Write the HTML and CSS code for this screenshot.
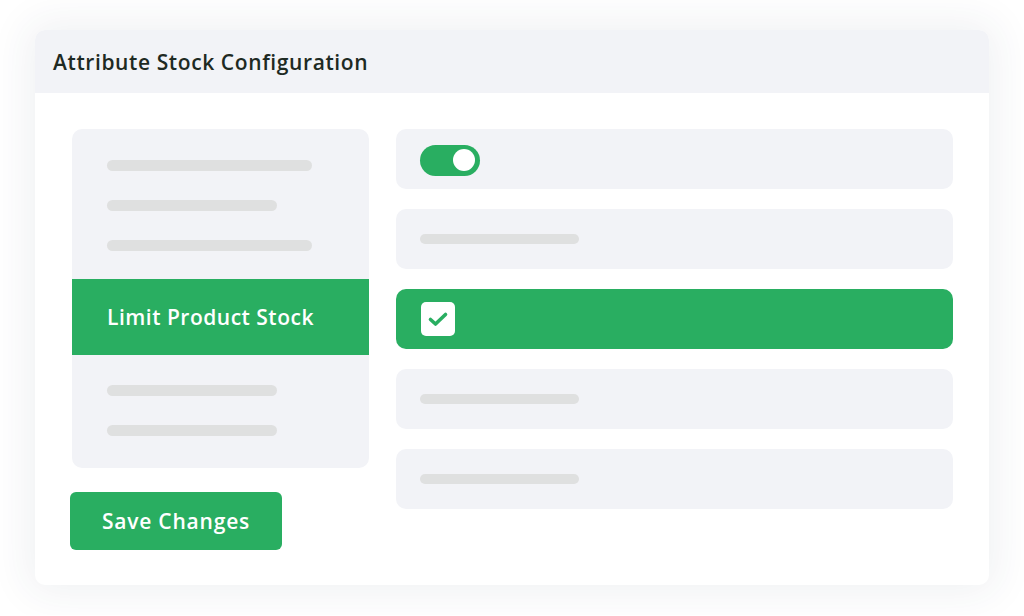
FILE: index.html
```html
<!DOCTYPE html>
<html lang="en">
<head>
  <meta charset="UTF-8">
  <meta name="viewport" content="width=device-width, initial-scale=1.0">
  <title>Attribute Stock Configuration</title>
  <link rel="stylesheet" href="styles.css">
</head>
<body>
  <div class="card">
    <div class="card-header">Attribute Stock Configuration</div>

    <div class="card-body">
      <div class="left-col">
        <div class="side-panel">
          <div class="lines top-lines">
            <span class="line long"></span>
            <span class="line short"></span>
            <span class="line long"></span>
          </div>
          <div class="side-item active">Limit Product Stock</div>
          <div class="lines bottom-lines">
            <span class="line short"></span>
            <span class="line short"></span>
          </div>
        </div>
        <button class="save-btn">Save Changes</button>
      </div>

      <div class="right-col">
        <div class="row">
          <div class="toggle"><span class="knob"></span></div>
        </div>
        <div class="row"><span class="line row-line"></span></div>
        <div class="row checked">
          <div class="checkbox">
            <svg width="22" height="22" viewBox="0 0 22 22">
              <path d="M3.5 11.5 L8.5 16 L18.5 6.5" fill="none" stroke="#29ae61" stroke-width="3.6" stroke-linecap="round" stroke-linejoin="round"/>
            </svg>
          </div>
        </div>
        <div class="row"><span class="line row-line"></span></div>
        <div class="row"><span class="line row-line"></span></div>
      </div>
    </div>
  </div>
</body>
</html>
```

FILE: styles.css
```css
body {
  margin: 0;
  padding: 30px 35px;
  background: #ffffff;
  font-family: 'Open Sans', 'Noto Sans', sans-serif;
}

.card {
  width: 954px;
  background: #fff;
  border-radius: 10px;
  overflow: hidden;
  box-shadow: 0 0 40px 8px rgba(40, 50, 90, 0.07);
}

.card-header {
  height: 63px;
  background: #f2f3f7;
  padding-left: 18px;
  display: flex;
  align-items: center;
  font-size: 21px;
  font-weight: 600;
  letter-spacing: 0.6px;
  color: #1e2a23;
}

.card-body {
  display: flex;
  gap: 27px;
  padding: 36px 36px 35px 37px;
}

.left-col {
  width: 297px;
  display: flex;
  flex-direction: column;
}

.side-panel {
  background: #f2f3f7;
  border-radius: 10px;
  padding: 31px 0 32px;
  overflow: hidden;
}

.lines {
  display: flex;
  flex-direction: column;
  gap: 29px;
  padding: 0 35px;
}

.top-lines { margin-bottom: 28px; }
.bottom-lines { margin-top: 30px; }

.line {
  display: block;
  height: 11px;
  border-radius: 6px;
  background: #dfe0e0;
}

.line.long { width: 205px; }
.line.short { width: 170px; }

.side-item {
  height: 76px;
  display: flex;
  align-items: center;
  padding-left: 35px;
  font-size: 21px;
  font-weight: 600;
  letter-spacing: 0.5px;
}

.side-item.active {
  background: #29ae61;
  color: #fff;
}

.save-btn {
  margin: 24px 0 0 -2px;
  width: 212px;
  height: 58px;
  border: none;
  border-radius: 6px;
  background: #29ae61;
  color: #fff;
  font-family: inherit;
  font-size: 21px;
  font-weight: 600;
  letter-spacing: 0.8px;
  cursor: pointer;
}

.right-col {
  flex: 1;
  display: flex;
  flex-direction: column;
  gap: 20px;
}

.row {
  height: 60px;
  background: #f2f3f7;
  border-radius: 10px;
  display: flex;
  align-items: center;
  padding-left: 24px;
}

.row.checked {
  background: #29ae61;
  padding-left: 25px;
}

.row-line { width: 159px; height: 10px; }

.toggle {
  width: 60px;
  height: 31px;
  margin-top: 2px;
  border-radius: 16px;
  background: #29ae61;
  display: flex;
  align-items: center;
  justify-content: flex-end;
  padding-right: 5px;
  box-sizing: border-box;
}

.knob {
  width: 22px;
  height: 22px;
  border-radius: 50%;
  background: #fff;
}

.checkbox {
  width: 34px;
  height: 34px;
  border-radius: 5px;
  background: #fff;
  display: flex;
  align-items: center;
  justify-content: center;
}
```
